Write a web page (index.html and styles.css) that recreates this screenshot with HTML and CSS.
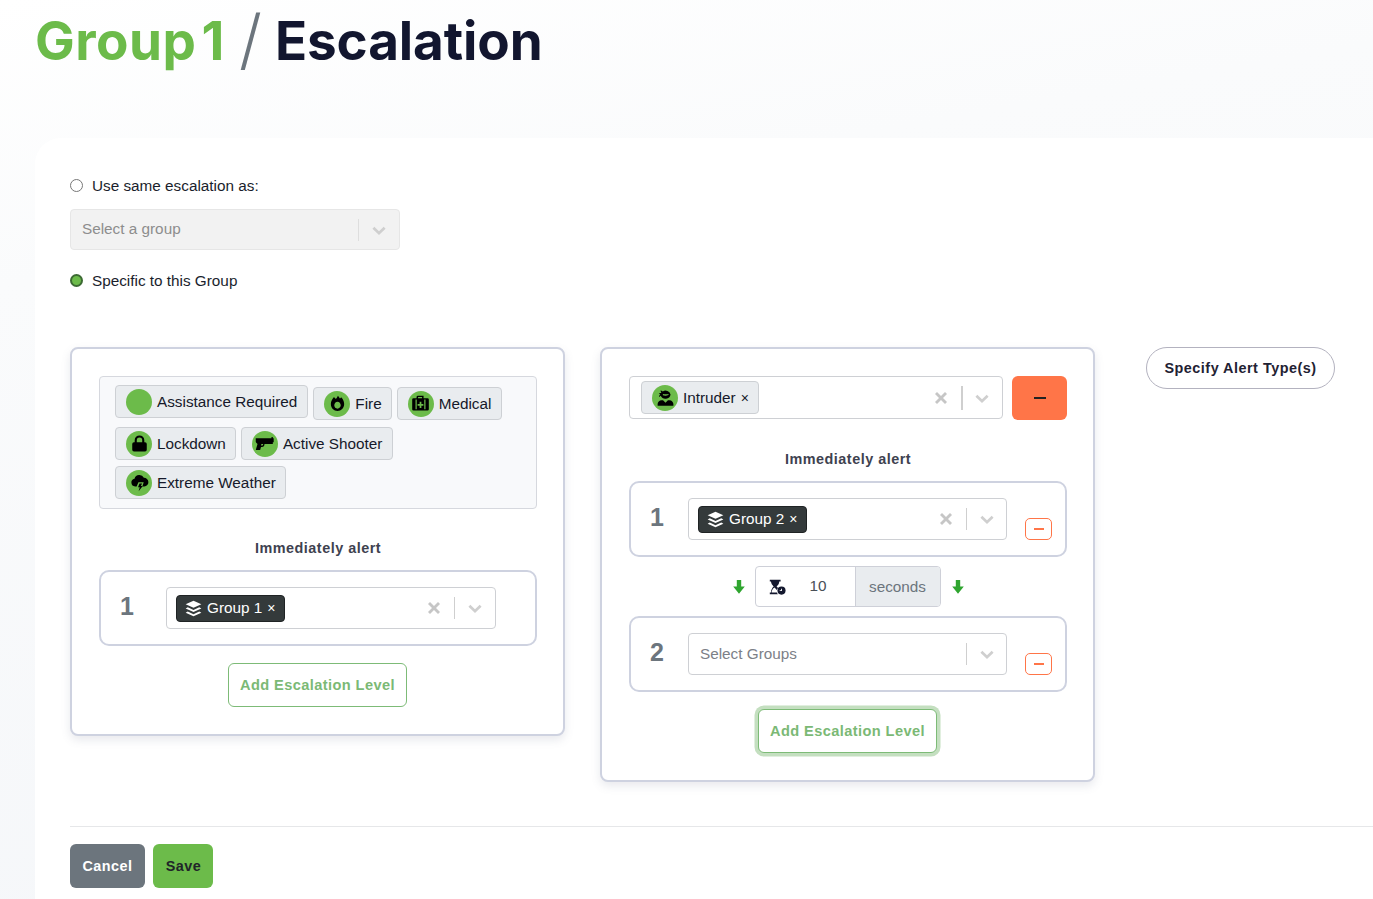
FILE: index.html
```html
<!DOCTYPE html>
<html lang="en">
<head>
<meta charset="utf-8">
<title>Group 1 / Escalation</title>
<link rel="stylesheet" href="styles.css">
</head>
<body>
<svg class="defs" width="0" height="0" aria-hidden="true">
  <symbol id="i-layers" viewBox="0 0 16 16">
    <path d="M8 .6 15.4 4 8 7.4.6 4z"/>
    <path d="M2.6 6.9.6 8 8 11.4 15.4 8l-2-1.1L8 9.4z"/>
    <path d="M2.6 10.9.6 12 8 15.4 15.4 12l-2-1.1L8 13.4z"/>
  </symbol>
  <symbol id="i-chev" viewBox="0 0 20 20">
    <path d="M4.8 6.400 10 11.400l5.200-5 2.100 2.100L10 15.600 2.700 8.500z"/>
  </symbol>
  <symbol id="i-x" viewBox="0 0 20 20">
    <path d="M5 2.500 10 7.500 15 2.500 17.500 5 12.500 10 17.500 15 15 17.500 10 12.500 5 17.500 2.500 15 7.500 10 2.500 5z"/>
  </symbol>
  <symbol id="i-down" viewBox="0 0 12 14">
    <path d="M3.800 0h4.400v6.500h3.600L6 13.800.2 6.500h3.600z"/>
  </symbol>
</svg>

<header class="page-head">
  <h1 class="title"><span class="title-group">Group 1</span><span class="title-slash">/</span><span class="title-page">Escalation</span></h1>
</header>

<main class="panel">
  <label class="radio-row"><input type="radio" name="mode" class="radio"><span class="radio-text">Use same escalation as:</span></label>
  <div class="select select-disabled">
    <span class="placeholder">Select a group</span>
    <span class="sel-sep"></span>
    <svg class="chev"><use href="#i-chev"/></svg>
  </div>
  <label class="radio-row radio-row-2"><input type="radio" name="mode" class="radio" checked><span class="radio-text">Specific to this Group</span></label>

  <div class="columns">
    <section class="card card-1">
      <div class="alert-box">
        <div class="alert-row alert-row-1">
          <span class="chip chip-assist"><span class="ic"></span>Assistance Required</span>
          <span class="chip chip-fire">
            <span class="ic"><svg viewBox="0 0 24 24"><path d="M8 4.500c1 1.300 1.500 1.900 2.300 2.200C11 5.800 12 4 12.500 3c1 .9 1.700 2.300 2.300 3.400.5-.5 1-1 1.300-1.600 2 1.800 3.500 4.600 3.500 7.700 0 4.500-3.400 8-7.600 8s-7.600-3.500-7.600-8c0-3 1.700-5.900 3.600-8zm4 5.600c-2 0-3.700 1.800-3.700 4s1.700 3.800 3.700 3.800 3.700-1.700 3.700-3.800-1.700-4-3.700-4z"/></svg></span>Fire</span>
          <span class="chip chip-med">
            <span class="ic"><svg viewBox="0 0 24 24"><path d="M9 3h6.500v3H20a1.500 1.500 0 0 1 1.500 1.500v11A1.500 1.500 0 0 1 20 20H4a1.500 1.500 0 0 1-1.500-1.500v-11A1.500 1.500 0 0 1 4 6h3.500V4.500A1.500 1.500 0 0 1 9 3zm.200 1.700V6h4.600V4.700zM6.300 7.500v11h1.400v-11zm10 0v11h1.400v-11zM11 10v2.500H8.700v2H11V17h2v-2.500h2.300v-2H13V10z"/></svg></span>Medical</span>
        </div>
        <div class="alert-row alert-row-2">
          <span class="chip chip-lock">
            <span class="ic"><svg viewBox="0 0 24 24"><path d="M12 2.800a5.500 5.500 0 0 1 5.500 5.500v2.200h.8a2 2 0 0 1 2 2v6.700a2 2 0 0 1-2 2H5.700a2 2 0 0 1-2-2v-6.700a2 2 0 0 1 2-2h.8V8.300A5.500 5.500 0 0 1 12 2.800zm0 2.400a3.100 3.100 0 0 0-3.100 3.100v2.200h6.200V8.300A3.100 3.100 0 0 0 12 5.200z"/></svg></span>Lockdown</span>
          <span class="chip chip-gun">
            <span class="ic"><svg viewBox="0 0 24 24"><path fill-rule="evenodd" d="M2 6h18V4.500h1.500V6h1v4.500h-1v2H12c0 2-1 3.500-3 3.500H8l-1 3.500H2l2-7c0-.5-1-1-1.500-1.500L2 10zm6.500 6.500h2c0 1-.5 1.700-1.200 1.700H8z"/></svg></span>Active Shooter</span>
        </div>
        <div class="alert-row alert-row-3">
          <span class="chip chip-weather">
            <span class="ic"><svg viewBox="0 0 24 24"><path d="M7 16.500a4.500 4.500 0 0 1-.7-8.900A5.800 5.800 0 0 1 17 6.700a4.900 4.900 0 0 1 .500 9.800h-2.300l1.600-4.700h-6L8.700 16.500z"/><path d="M12 13h3l-1.500 3h2.200L11 22l1.300-4.500h-2z"/></svg></span>Extreme Weather</span>
        </div>
      </div>
      <h2 class="alert-title alert-title-1">Immediately alert</h2>
      <div class="level">
        <span class="level-num level-num-wide">1</span>
        <div class="select select-level-1">
          <span class="tag"><svg class="tag-ic"><use href="#i-layers"/></svg>Group 1<span class="tag-x">×</span></span>
          <svg class="clear"><use href="#i-x"/></svg>
          <span class="sel-sep"></span>
          <svg class="chev"><use href="#i-chev"/></svg>
        </div>
      </div>
      <div class="add-wrap"><button class="add-btn" type="button">Add Escalation Level</button></div>
    </section>

    <section class="card card-2">
      <div class="alert-select-row">
        <div class="select select-intruder">
          <span class="chip chip-intruder">
            <span class="ic"><svg viewBox="0 0 24 24"><path d="M7.300 6.500c-.5-.8-.9-1.500-1-2.500 1 .1 1.800.5 2.600 1A6 6 0 0 1 17.800 8.500 6 6 0 0 1 6.500 10c-.5.700-1.200 1.200-2 1.500.1-1.200.8-2.400 1.500-3.200-.5-.3-1.200-.5-1.800-.6.900-.8 1.900-.9 3.100-1.200zm1.700 1.400v1.500c2 .8 4.500.8 6.500-.5V8C13 8.300 11 8.300 9 7.900z"/><path d="M7.500 15h1.700l2.800 3 2.800-3h1.700c2.600 0 4.500 2 4.500 4.500V21.500H3v-2C3 17 5 15 7.500 15z"/></svg></span>Intruder<span class="tag-x tag-x-dark">×</span></span>
          <svg class="clear"><use href="#i-x"/></svg>
          <span class="sel-sep sel-sep-strong"></span>
          <svg class="chev"><use href="#i-chev"/></svg>
        </div>
        <button class="remove-big" type="button" aria-label="Remove"><span class="minus-bar"></span></button>
      </div>
      <h2 class="alert-title alert-title-2">Immediately alert</h2>
      <div class="level">
        <span class="level-num">1</span>
        <div class="select select-level">
          <span class="tag"><svg class="tag-ic"><use href="#i-layers"/></svg>Group 2<span class="tag-x">×</span></span>
          <svg class="clear"><use href="#i-x"/></svg>
          <span class="sel-sep"></span>
          <svg class="chev"><use href="#i-chev"/></svg>
        </div>
        <button class="remove-small" type="button" aria-label="Remove"><span class="minus-bar"></span></button>
      </div>
      <div class="delay">
        <svg class="arrow"><use href="#i-down"/></svg>
        <div class="delay-group">
          <span class="delay-input">
            <svg class="hourglass" viewBox="0 0 20 20"><path d="M2 2h12v2h-1.500c0 2.600-1.500 4.300-3 5.500 .6.500 1.200 1 1.700 1.700a5 5 0 0 0-1.400 2.300c-.5-1-1.200-1.800-2.800-3-1.800 1.500-2.900 3-3 5.500H10c.2.700.5 1.400 1 2H2v-2h1.300c.1-3 1.400-5 3-6.500-1.600-1.500-2.900-3.500-3-5.500H2z"/><circle cx="15" cy="14" r="4.500"/><path d="M14.500 12h1v2.500h-2.500v-1h1.500z" fill="#fff"/></svg>
            <span class="delay-val">10</span>
          </span>
          <span class="delay-unit">seconds</span>
        </div>
        <svg class="arrow"><use href="#i-down"/></svg>
      </div>
      <div class="level">
        <span class="level-num">2</span>
        <div class="select select-level">
          <span class="placeholder placeholder-dark">Select Groups</span>
          <span class="sel-sep"></span>
          <svg class="chev"><use href="#i-chev"/></svg>
        </div>
        <button class="remove-small" type="button" aria-label="Remove"><span class="minus-bar"></span></button>
      </div>
      <div class="add-wrap add-wrap-2"><button class="add-btn add-btn-focus" type="button">Add Escalation Level</button></div>
    </section>

    <button class="specify" type="button">Specify Alert Type(s)</button>
  </div>

  <footer class="actions">
    <button class="btn btn-cancel" type="button">Cancel</button>
    <button class="btn btn-save" type="button">Save</button>
  </footer>
</main>
</body>
</html>
```
FILE: styles.css
```css
* { box-sizing: border-box; }
html, body { margin: 0; height: 899px; overflow: hidden; }
body {
  font-family: "Liberation Sans", Arial, sans-serif;
  font-size: 15.3px;
  color: #1a1e2c;
  background: linear-gradient(170deg, #ffffff 0%, #fafbfc 25%, #f4f6f9 100%);
}
.defs { position: absolute; }
button { font-family: inherit; cursor: pointer; }

.page-head { height: 138px; padding-left: 35px; }
.title { margin: 0; display: flex; align-items: flex-start; height: 100%; font-family: Inter, sans-serif; font-weight: 700; font-size: 53px; line-height: 82px; }
.title-group { color: #6cbb4a; white-space: nowrap; letter-spacing: 0.5px; word-spacing: -8px; }
.title-slash { color: #6c757d; font-weight: 300; font-size: 66px; line-height: 78px; margin-left: 14px; margin-right: 13px; }
.title-page { color: #12162f; white-space: nowrap; letter-spacing: -0.1px; }

.panel { margin-left: 35px; height: 761px; padding: 37px 0 0 35px; background: #fff; border-top-left-radius: 26px; }

.radio-row { display: flex; align-items: center; gap: 9px; height: 20px; font-size: 15.3px; color: #1a1e2c; }
.radio-row-2 { margin-top: 20px; }
.radio-text { margin-top: 1px; }
.radio { appearance: none; margin: 0; width: 13px; height: 13px; border: 1px solid #777; border-radius: 50%; background: #fff; flex: none; }
.radio:checked { background: #6cbb4a; border: 2px solid #3c6a33; }

.select { display: flex; align-items: center; height: 42px; border: 1px solid #ced0d4; border-radius: 4px; background: #fff; padding-right: 11px; }
.select-disabled { margin-top: 14px; width: 330px; height: 41px; background: #f2f2f2; border-color: #e6e6e6; padding-left: 11px; }
.placeholder { flex: 1; color: #8d8d8d; font-size: 15.3px; margin-top: -2px; }
.placeholder-dark { color: #7c8087; padding-left: 2px; margin-top: 0; }
.sel-sep { width: 1px; height: 22px; background: #cfcfcf; margin: 0 11px; flex: none; }
.select-disabled .sel-sep { background: #dedede; }
.sel-sep-strong { width: 2px; height: 24px; margin: 0 10px 0 11px; }
.chev { width: 18px; height: 18px; fill: #cfcfcf; flex: none; }
.clear { width: 16px; height: 16px; fill: #c6c6c6; margin-left: auto; margin-right: 1px; flex: none; }

.columns { display: flex; align-items: flex-start; margin-top: 57px; }
.card { flex: none; width: 495px; padding: 27px 26px 27px 27px; background: #fff; border: 2px solid #ced2e0; border-radius: 8px; box-shadow: 0 4px 10px rgba(90, 100, 130, .14); }
.card-1 { height: 389px; }
.card-2 { height: 435px; margin-left: 35px; }

.alert-box { height: 133px; padding: 8px 15px 0; background: #f8f9fb; border: 1px solid #d6d8de; border-radius: 4px; }
.alert-row { display: flex; align-items: flex-start; }
.alert-row-1 { gap: 5px; height: 42px; }
.alert-row-2 { gap: 4px; height: 39px; }
.chip { display: inline-flex; align-items: center; gap: 5px; height: 33px; padding: 0 9px 0 10px; background: #e9ecef; border: 1px solid #cdd0d4; border-radius: 4px; white-space: nowrap; color: #16192a; font-size: 15.3px; }
.chip-assist { padding-right: 10px; }
.chip-fire, .chip-med { margin-top: 2px; }
.chip-med { padding-right: 10px; }
.chip-gun { margin-left: 1px; padding-right: 9.500px; }
.ic { width: 26px; height: 26px; flex: none; display: flex; align-items: center; justify-content: center; border-radius: 50%; background: #6cbb4a; }
.ic svg { width: 21px; height: 21px; fill: #000; }

.alert-title { margin: 0; text-align: center; font-size: 14.4px; font-weight: 700; letter-spacing: .5px; color: #3e4250; line-height: 20px; }
.alert-title-1 { margin-top: 29px; margin-bottom: 12px; }
.alert-title-2 { margin-top: 29px; margin-bottom: 12px; }

.level { position: relative; display: flex; align-items: center; width: 438px; height: 76px; padding-left: 19px; border: 2px solid #ced2e0; border-radius: 10px; background: #fff; }
.level-num { font-size: 25px; font-weight: 700; color: #6c757d; width: 38px; margin-top: -4px; flex: none; }
.level-num-wide { width: 46px; }
.select-level-1 { width: 330px; padding-left: 9px; }
.select-level { width: 319px; padding-left: 9px; padding-right: 10px; }
.tag { display: inline-flex; align-items: center; height: 27px; padding: 0 9px 0 8px; background: #343a3b; border: 1px solid #1f2324; border-radius: 4px; color: #fff; font-size: 15.3px; white-space: nowrap; }
.tag-ic { width: 17px; height: 17px; fill: #fff; margin-right: 5px; flex: none; }
.tag-x { margin-left: 5px; font-size: 14px; line-height: 1; }
.tag-x-dark { color: #16192a; margin-left: 0; }

.add-wrap { display: flex; justify-content: center; margin-top: 17px; }
.add-btn { width: 179px; height: 44px; padding: 0; margin-right: 1px; background: #fff; border: 1px solid #7dbb77; border-radius: 6px; color: #7bb975; font-size: 14.6px; font-weight: 700; letter-spacing: .4px; }
.add-btn-focus { box-shadow: 0 0 0 3.500px #c4dfc0; }

.alert-select-row { display: flex; gap: 9px; align-items: flex-start; }
.select-intruder { width: 374px; height: 43px; padding-left: 11px; flex: none; }
.chip-intruder { padding-right: 9px; }
.remove-big { flex: none; width: 55px; height: 44px; display: flex; align-items: center; justify-content: center; padding: 0; background: #ff7548; border: 0; border-radius: 6px; }
.remove-big .minus-bar { display: block; width: 12px; height: 2px; background: #222; }
.remove-small { position: absolute; right: 13px; bottom: 15px; width: 27px; height: 22px; display: flex; align-items: center; justify-content: center; padding: 0; background: #fff; border: 1px solid #ff7548; border-radius: 5px; }
.remove-small .minus-bar { display: block; width: 10px; height: 1.500px; background: #ff7548; }

.delay { display: flex; align-items: center; justify-content: center; gap: 10px; height: 41px; margin: 9px 0; width: 438px; }
.arrow { width: 12px; height: 14px; fill: #2fa52f; flex: none; }
.delay-group { display: flex; width: 186px; height: 41px; margin-right: 1px; border: 1px solid #ced0d8; border-radius: 4px; overflow: hidden; }
.delay-input { flex: none; width: 99px; display: flex; align-items: center; padding-left: 12px; }
.hourglass { width: 18px; height: 18px; fill: #14182e; flex: none; }
.delay-val { margin-left: 24px; color: #495057; font-size: 15.3px; margin-top: -2px; }
.delay-unit { flex: 1; display: flex; align-items: center; justify-content: center; background: #e9ecef; border-left: 1px solid #ced0d8; color: #6c757d; font-size: 15.3px; }

.specify { flex: none; margin-left: 51px; width: 189px; height: 42px; padding: 0; background: #fff; border: 1px solid #b3b2bf; border-radius: 21px; color: #1f2233; font-size: 14.4px; font-weight: 700; letter-spacing: .5px; }

.actions { position: absolute; left: 70px; right: 0; top: 826px; height: 62px; border-top: 1px solid #e6e7e9; padding-top: 17px; display: flex; gap: 8px; }
.btn { height: 44px; padding: 0; border: 0; border-radius: 6px; font-size: 14.4px; font-weight: 700; letter-spacing: .5px; }
.btn-cancel { width: 75px; background: #6c757d; color: #fff; }
.btn-save { width: 60px; padding-left: 1px; background: #6cbb4a; color: #212529; }
```
